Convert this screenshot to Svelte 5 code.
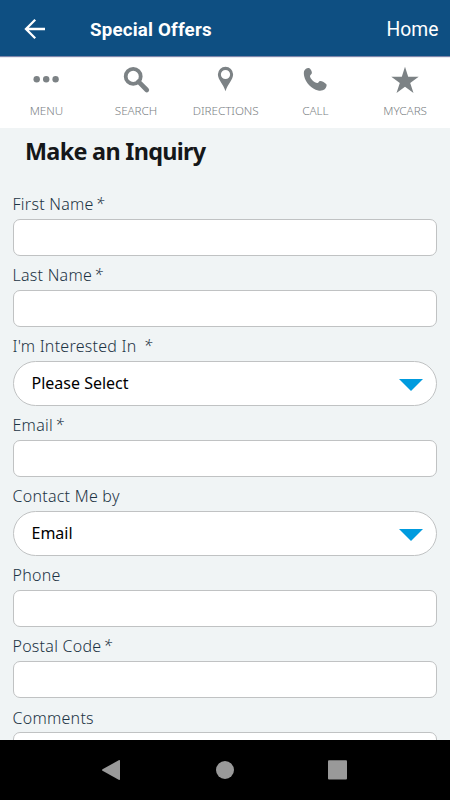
<script>
    const tabs = [
        { icon: 'menu', label: 'MENU' },
        { icon: 'search', label: 'SEARCH' },
        { icon: 'pin', label: 'DIRECTIONS' },
        { icon: 'phone', label: 'CALL' },
        { icon: 'star', label: 'MYCARS' }
    ];

    const fields = [
        { label: 'First Name', required: true },
        { label: 'Last Name', required: true },
        { label: "I'm Interested In", required: true, spaced: true, value: 'Please Select' },
        { label: 'Email', required: true },
        { label: 'Contact Me by', value: 'Email' },
        { label: 'Phone' },
        { label: 'Postal Code', required: true },
        { label: 'Comments' }
    ];
</script>

<div class="screen">
    <header>
        <svg class="back" width="22" height="22" viewBox="0 0 22 22">
            <path d="M21 11H3M11.2 1.8L2 11l9.2 9.2" fill="none" stroke="#fff" stroke-width="2.3" />
        </svg>
        <h1>Special Offers</h1>
        <span class="home">Home</span>
    </header>

    <nav class="tabs">
        {#each tabs as tab}
            <div class="tab">
                <svg width="30" height="30" viewBox="0 0 30 30">
                    {#if tab.icon === 'menu'}
                        <circle cx="5.7" cy="15.3" r="3.2" />
                        <circle cx="15.2" cy="15.3" r="3.2" />
                        <circle cx="24.6" cy="15.3" r="3.2" />
                    {:else if tab.icon === 'search'}
                        <circle cx="12.2" cy="12.4" r="7.5" class="line" stroke-width="3.8" />
                        <path d="M17.5 17.7L25.8 26" class="line" stroke-width="4.6" stroke-linecap="round" />
                    {:else if tab.icon === 'pin'}
                        <path fill-rule="evenodd" d="M15.500 2.700a7.600 7.600 0 0 0-7.600 7.600c0 5.800 5.200 9 7.600 17 2.400-8 7.600-11.200 7.600-17A7.600 7.600 0 0 0 15.500 2.700zM15.500 5.900a4.600 4.600 0 1 1 0 9.200a4.600 4.600 0 0 1 0-9.200z" />
                    {:else if tab.icon === 'phone'}
                        <path d="M4.100 6.900C5.500 4.500 7.500 3.300 9.500 4.200c1.400 1 2.500 3.500 2.400 4.700c-.1 1.200-1.700 1.800-1.900 3c-.1 2.600 4.900 7.300 7.400 7c1.200-.2 1.500-1.800 2.700-2c1.700-.1 5.100 1.700 6.300 3.400c.7 1-.2 3.500-1.700 4.900c-1.300 1.200-4.300 1.800-6.600 1.200C11.500 24.800 5.700 18.800 4.200 12.200c-.4-2-.5-3.800-.1-5.300z" />
                    {:else}
                        <path d="M15 2.800l3.200 10h10.500l-8.500 6.200 3.300 10-8.500-6.200L6.500 29l3.300-10-8.500-6.200h10.500z" />
                    {/if}
                </svg>
                <span>{tab.label}</span>
            </div>
        {/each}
    </nav>

    <main>
        <h2>Make an Inquiry</h2>
        {#each fields as field}
            <div class="field">
                <div class="label">
                    {field.label}{#if field.required}<em class:spaced={field.spaced}>*</em>{/if}
                </div>
                {#if field.value}
                    <div class="select">
                        <span>{field.value}</span>
                        <svg width="24" height="12" viewBox="0 0 24 12">
                            <path d="M0 0h24L12 12z" fill="#009bde" />
                        </svg>
                    </div>
                {:else}
                    <input type="text" aria-label={field.label} />
                {/if}
            </div>
        {/each}
    </main>

    <footer>
        <svg width="450" height="60" viewBox="0 0 450 60" fill="#999">
            <path d="M118.7 20.3q1.3-.7 1.3.7v18q0 1.4-1.3.7L102.5 30.8q-1-.8 0-1.6z" />
            <circle cx="225" cy="30" r="9" />
            <rect x="328" y="20.3" width="19" height="19.2" rx="1" />
        </svg>
    </footer>
</div>

<style>
    :global(body) {
        margin: 0;
    }
    .screen {
        display: flex;
        flex-direction: column;
        width: 450px;
        height: 800px;
        overflow: hidden;
        background: #f0f4f5;
        font-family: 'Noto Sans', sans-serif;
    }
    header {
        display: flex;
        align-items: center;
        flex: none;
        box-sizing: border-box;
        height: 56px;
        padding: 2px 11.5px 0 24px;
        background: #0e4f82;
        box-shadow: 0 1px 1px #7c86ab;
        color: #fff;
        font-family: Roboto, sans-serif;
        z-index: 1;
    }
    .back {
        margin-top: -1px;
    }
    h1 {
        margin: 1px 0 0 44px;
        font-size: 18.7px;
        font-weight: 700;
        letter-spacing: 0.2px;
        line-height: 24px;
    }
    .home {
        margin: 2px 0 0 auto;
        font-size: 19.3px;
        line-height: 24px;
    }
    .tabs {
        display: grid;
        grid-template-columns: repeat(5, 89.7px);
        flex: none;
        height: 72px;
        padding-left: 1px;
        background: #fff;
    }
    .tab {
        display: flex;
        flex-direction: column;
        align-items: center;
        padding-top: 8px;
    }
    .tab svg {
        fill: #7c8285;
    }
    .tab .line {
        fill: none;
        stroke: #7c8285;
    }
    .tab span {
        margin: 8px 0 0 1px;
        color: #7c8285;
        font-size: 11.7px;
        font-weight: 350;
        letter-spacing: -0.05px;
        line-height: 16px;
    }
    main {
        flex: 1;
        min-height: 0;
        overflow: hidden;
        padding: 0 12.5px;
    }
    h2 {
        margin: 7px 0 27px 12.5px;
        color: #151719;
        font-size: 23.4px;
        font-weight: 700;
        letter-spacing: -0.7px;
        line-height: 32px;
    }
    .field {
        margin-bottom: 9.5px;
    }
    .label {
        height: 24.5px;
        color: #1c3344;
        font-size: 16px;
        font-weight: 350;
        letter-spacing: 0.25px;
        line-height: 20px;
        white-space: nowrap;
    }
    em {
        margin-left: 2px;
    }
    .spaced {
        margin-left: 7px;
    }
    input,
    .select {
        display: block;
        box-sizing: border-box;
        width: 424.5px;
        height: 37.2px;
        margin: 0;
        border: 1px solid #c0c2c3;
        border-radius: 7px;
        background: #fff;
    }
    .select {
        display: flex;
        align-items: center;
        justify-content: space-between;
        height: 44.8px;
        padding: 0 13px 0 18px;
        border-radius: 23px;
        color: #000;
        font-size: 16px;
    }
    .select svg {
        margin-top: 3px;
    }
    footer {
        flex: none;
        height: 60px;
        background: #000;
    }
</style>
